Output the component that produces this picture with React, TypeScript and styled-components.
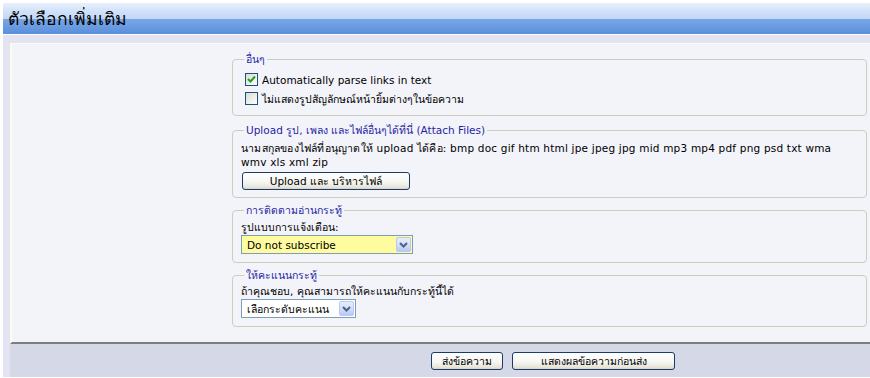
import React from 'react';
import styled, { createGlobalStyle } from 'styled-components';

const Global = createGlobalStyle`
  html, body {
    margin: 0;
    padding: 0;
    background: #fff;
  }
  body {
    font-family: "DejaVu Sans", "Noto Sans", sans-serif;
    font-size: 10.5px;
    line-height: 14px;
    color: #000;
  }
`;

const Page = styled.div`
  padding: 3px 0 0 3px;
  width: 867px;
`;

const Header = styled.div`
  height: 31px;
  border-bottom: 1px solid #fff;
  background: linear-gradient(
    to bottom,
    #e8f0fd 0%,
    #d2e2f9 25%,
    #c2d6f6 50%,
    #78a6e6 52%,
    #6899e0 80%,
    #5a8fdc 100%
  );
  display: flex;
  align-items: center;
  padding-left: 5px;
  font-size: 17.5px;
  line-height: 20px;
`;

const Body = styled.div`
  background: #e2e5f1;
  padding: 8px 0 0 7px;
`;

const Panel = styled.div`
  background: #f3f3fa;
  border-top: 1px solid #fbfbee;
  border-left: 2px solid #fbfbee;
  border-bottom: 2px solid #7d7d7d;
  display: grid;
  grid-template-columns: 220px 1fr;
  padding: 8px 3px 15px 0;
`;

const Column = styled.div`
  display: flex;
  flex-direction: column;
`;

const Group = styled.fieldset<{ $pad: string; $gap?: number }>`
  margin: 0 0 ${p => p.$gap ?? 5}px;
  padding: ${p => p.$pad};
  border: 1px solid #cdcdbd;
  border-radius: 4px;
  min-width: 0;
  &:last-child {
    margin-bottom: 0;
  }
`;

const Legend = styled.legend`
  color: #1f1fa3;
  margin-left: 3px;
  padding: 0 2px;
  height: 14px;
`;

const CheckRow = styled.label`
  display: flex;
  align-items: center;
  height: 19px;
  padding-left: 4px;
  gap: 4px;
`;

const Box = styled.span`
  width: 11px;
  height: 11px;
  border: 1px solid #1c5180;
  background: linear-gradient(135deg, #dcdcd5 0%, #f4f4f0 70%, #fff 100%);
  display: flex;
  align-items: center;
  justify-content: center;
`;

const Text = styled.div<{ $h?: number; $spacing?: number }>`
  height: ${p => (p.$h ? `${p.$h}px` : 'auto')};
  letter-spacing: ${p => p.$spacing ?? 0}px;
`;

const Button = styled.button<{ $w: number }>`
  width: ${p => p.$w}px;
  height: 18px;
  padding: 0;
  border: 1px solid #1c3a6a;
  border-radius: 3px;
  background: linear-gradient(to bottom, #ffffff 0%, #f5f5f0 60%, #e6e3d8 90%, #d6d0c5 100%);
  font: inherit;
  font-size: 10.5px;
  color: #000;
`;

const UploadButton = styled(Button)`
  margin: 3px 0 0 1px;
`;

const Select = styled.div<{ $w: number; $bg: string }>`
  width: ${p => p.$w}px;
  height: 17px;
  margin-top: 1px;
  border: 1px solid #7f9db9;
  background: ${p => p.$bg};
  display: flex;
  align-items: center;
`;

const SelectText = styled.span`
  flex: 1;
  padding-left: 5px;
  white-space: nowrap;
`;

const Arrow = styled.span`
  width: 15px;
  height: 15px;
  margin-right: 1px;
  border: 1px solid #b9c9ef;
  border-radius: 2px;
  box-sizing: border-box;
  background: linear-gradient(to bottom, #e6eefd 0%, #cfdcfa 60%, #b6c9f3 100%);
  display: flex;
  align-items: center;
  justify-content: center;
`;

const Footer = styled.div`
  height: 33px;
  background: #d5d8e6;
  display: grid;
  grid-template-columns: 229px 1fr;
`;

const FooterButtons = styled.div`
  display: flex;
  justify-content: center;
  gap: 9px;
  padding: 8px 3px 0 0;
`;

const Check = () => (
  <svg width="9" height="9" viewBox="0 0 9 9">
    <polyline points="1,4 3.5,6.5 8,1.5" fill="none" stroke="#21a121" strokeWidth="2" />
  </svg>
);

const Chevron = () => (
  <svg width="9" height="6" viewBox="0 0 9 6">
    <polyline points="1,1 4.5,4.5 8,1" fill="none" stroke="#4d6185" strokeWidth="2" />
  </svg>
);

export default function App() {
  return (
    <>
      <Global />
      <Page>
        <Header>ตัวเลือกเพิ่มเติม</Header>
        <Body>
          <Panel>
            <div />
            <Column>
              <Group $pad="4px 8px 7px" $gap={7}>
                <Legend>อื่นๆ</Legend>
                <CheckRow>
                  <Box><Check /></Box>
                  Automatically parse links in text
                </CheckRow>
                <CheckRow>
                  <Box />
                  ไม่แสดงรูปสัญลักษณ์หน้ายิ้มต่างๆในข้อความ
                </CheckRow>
              </Group>
              <Group $pad="4px 8px 7px">
                <Legend>Upload รูป, เพลง และไฟล์อื่นๆได้ที่นี่ (Attach Files)</Legend>
                <Text $spacing={0.2}>
                  นามสกุลของไฟล์ที่อนุญาตให้ upload ได้คือ: bmp doc gif htm html jpe jpeg jpg mid mp3 mp4 pdf png psd txt wma wmv xls xml zip
                </Text>
                <UploadButton $w={168}>Upload และ บริหารไฟล์</UploadButton>
              </Group>
              <Group $pad="3px 8px 8px">
                <Legend>การติดตามอ่านกระทู้</Legend>
                <Text $h={14}>รูปแบบการแจ้งเตือน:</Text>
                <Select $w={170} $bg="#fffb9f">
                  <SelectText>Do not subscribe</SelectText>
                  <Arrow><Chevron /></Arrow>
                </Select>
              </Group>
              <Group $pad="2px 8px 8px">
                <Legend>ให้คะแนนกระทู้</Legend>
                <Text $h={14}>ถ้าคุณชอบ, คุณสามารถให้คะแนนกับกระทู้นี้ได้</Text>
                <Select $w={113} $bg="#fff">
                  <SelectText>เลือกระดับคะแนน</SelectText>
                  <Arrow><Chevron /></Arrow>
                </Select>
              </Group>
            </Column>
          </Panel>
          <Footer>
            <div />
            <FooterButtons>
              <Button $w={72}>ส่งข้อความ</Button>
              <Button $w={163}>แสดงผลข้อความก่อนส่ง</Button>
            </FooterButtons>
          </Footer>
        </Body>
      </Page>
    </>
  );
}
